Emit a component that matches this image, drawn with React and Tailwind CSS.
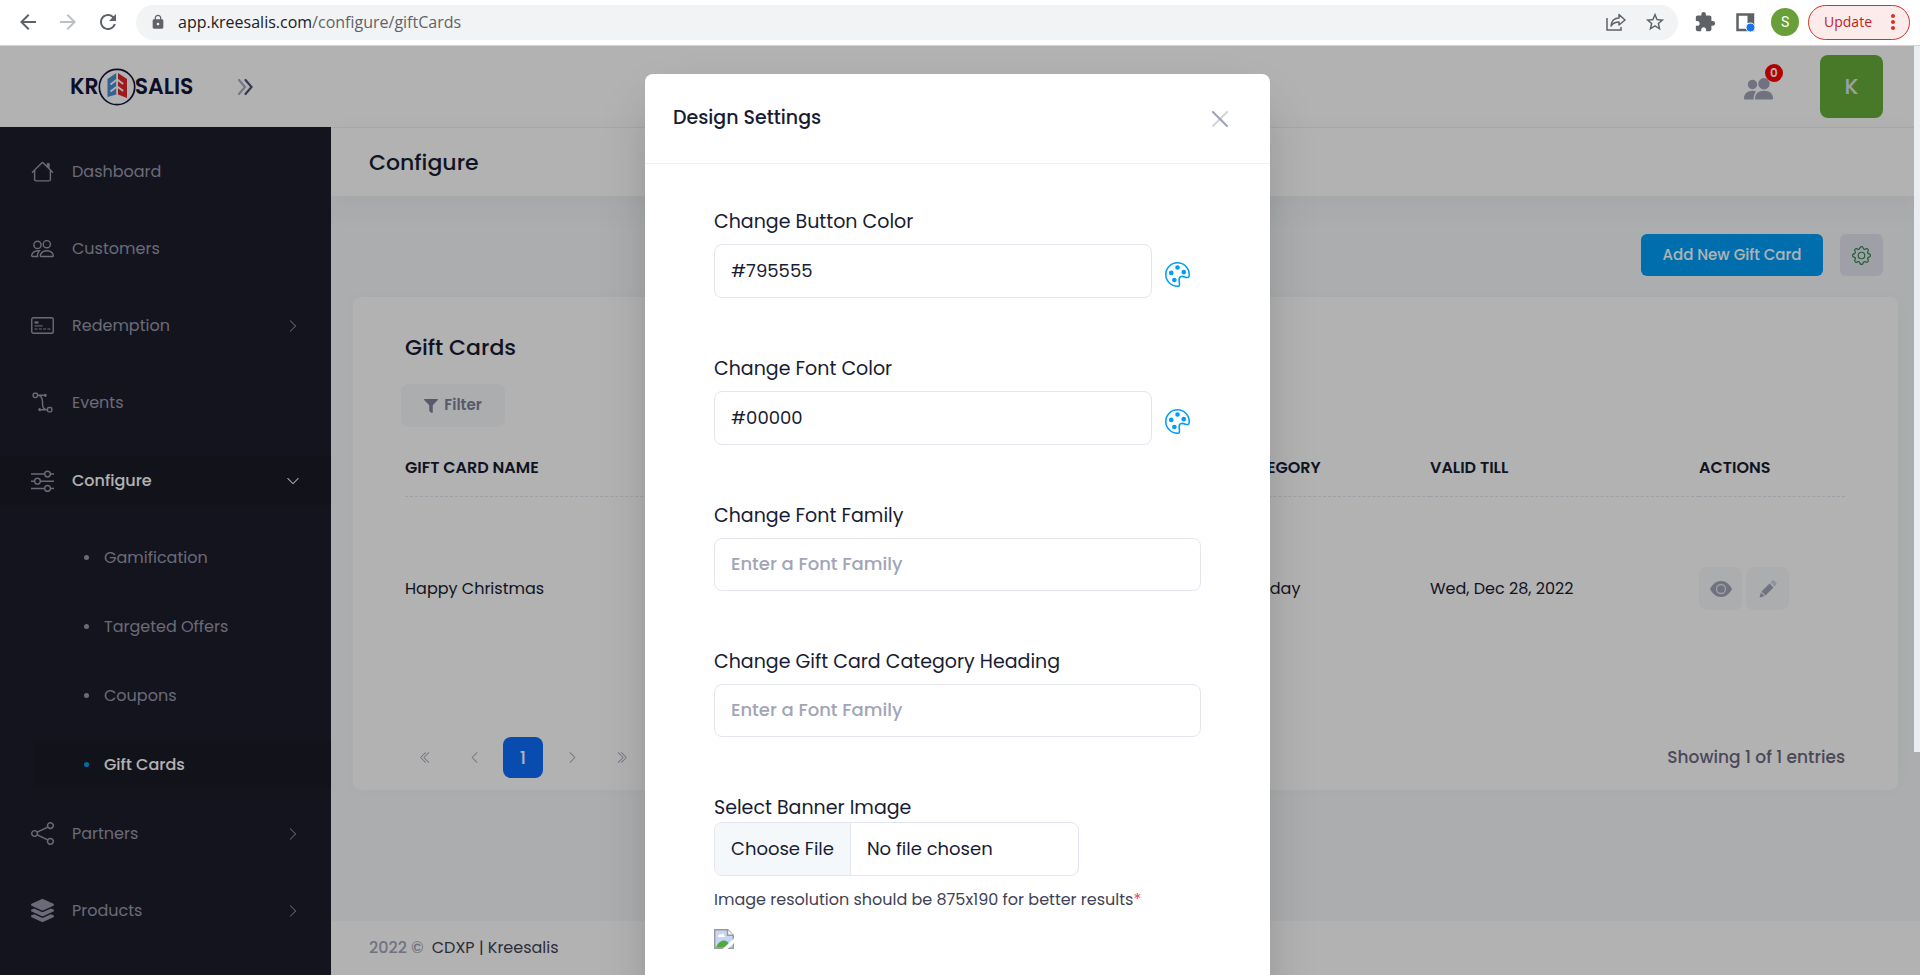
import { useState } from "react";
import {
    BsHouse,
    BsPeople,
    BsBezier2,
    BsSliders,
    BsShare,
    BsGear,
    BsPalette,
    BsChevronRight,
    BsChevronDown,
    BsChevronLeft,
    BsChevronDoubleLeft,
    BsChevronDoubleRight
} from "react-icons/bs";
import { FaFilter, FaLayerGroup } from "react-icons/fa";
import {
    MdArrowBack,
    MdArrowForward,
    MdRefresh,
    MdLock,
    MdStarBorder,
    MdExtension,
    MdMoreVert
} from "react-icons/md";

// =========================================
// ICONS
// =========================================

const CardIcon = ({ className }) => (
    <svg viewBox="0 0 23 17" className={className} fill="none" stroke="currentColor">
        <rect x="0.75" y="0.75" width="21.5" height="15.5" rx="1.8" strokeWidth="1.4" />
        <path d="M3.5 5.5h4" strokeWidth="2.2" />
        <path d="M3.5 8.9h8" strokeWidth="1.1" />
        <path d="M3.5 12h16" strokeWidth="1.1" strokeDasharray="3 1.3" />
    </svg>
);

const ShareIcon = () => (
    <svg viewBox="0 0 20 18" className="h-[18px] w-5 text-[#5f6368]" fill="none" stroke="currentColor" strokeWidth="1.5">
        <path d="M1 5v12h14v-3" />
        <path d="M5 13c.5-5 3-8 8-8V1.500l6 5.500-6 5V9c-3.500 0-6 1-8 4z" strokeLinejoin="round" />
    </svg>
);

const SidePanelIcon = () => (
    <svg viewBox="0 0 19 19" className="h-[19px] w-[19px]">
        <path d="M1.500 1.500h15.500v15.500h-15.500z" fill="none" stroke="#5f6368" strokeWidth="2.500" />
        <path d="M11.500 1h6v9h-6z" fill="#5f6368" />
        <circle cx="14.500" cy="14.500" r="4.500" fill="#1a73e8" stroke="#fff" strokeWidth="1" />
    </svg>
);

const UsersIcon = () => (
    <svg viewBox="0 0 29 22" className="h-[22px] w-[29px] text-[#a1a5b7]" fill="currentColor">
        <circle cx="8.500" cy="6.500" r="4.700" />
        <circle cx="20" cy="5.700" r="5.700" />
        <path d="M0 20.500C0 15.500 3.500 12.700 8.500 12.700c1.600 0 2.600.2 3.800.7-1.700 1.600-2.700 4-2.700 8.100H1c-.6 0-1-.4-1-1z" />
        <path d="M11 20.500c0-5 3.700-7.700 9-7.700s9 2.700 9 7.700c0 .6-.4 1-1 1H12c-.6 0-1-.4-1-1z" />
    </svg>
);

const EyeIcon = () => (
    <svg viewBox="0 0 22 16" className="h-4 w-[22px]">
        <path d="M11 0C16 0 19.500 3.500 22 8c-2.500 4.500-6 8-11 8S2.500 12.500 0 8C2.500 3.500 6 0 11 0z" fill="#a1a5b7" />
        <circle cx="11" cy="8" r="4.500" fill="none" stroke="#e4e6ef" strokeWidth="1.300" />
    </svg>
);

const PencilIcon = () => (
    <svg viewBox="0 0 18 18" className="h-[18px] w-[18px]">
        <path d="M11.500 2.500L13.200.8c.6-.6 1.500-.6 2.100 0l1.900 1.900c.6.600.6 1.500 0 2.100L15.500 6.500z" fill="#cfd2de" />
        <path d="M10.500 3.500l4 4-8 8-4-4z" fill="#a1a5b7" />
        <path d="M2 12.500L5.500 16 .5 17.600z" fill="#a1a5b7" />
    </svg>
);

const LogoMark = () => (
    <svg viewBox="0 0 38 38" className="-mx-px h-[38px] w-[38px]">
        <circle cx="19" cy="19" r="17.700" fill="none" stroke="#15153a" strokeWidth="1.700" />
        <path d="M18.200 5v21.500L9.500 29V11z" fill="#4a8fd0" />
        <path d="M20 5v21.500l9 3.500V11z" fill="#e3262b" />
        <path d="M19 11.500l-6.500 5M19 18.500l-6.500 5M19.200 11.500l6 4.500M19.200 18.500l6 4.500" stroke="#fff" strokeWidth="1.800" />
    </svg>
);

const BrokenImageIcon = () => (
    <svg viewBox="0 0 20 20" className="h-5 w-5" role="img" aria-label="Banner">
        <path d="M.7.7h13l5.600 5.600v13H.7z" fill="#c6d7f4" stroke="#9a9a9a" strokeWidth="1.400" />
        <path d="M13.500.7v5.600h5.800" fill="#fff" stroke="#9a9a9a" strokeWidth="1.400" />
        <path d="M4 7.500c0-1.500 1.500-2.500 3-2 1-1.500 3-.8 3 1 1 0 1.200 1 .8 1.500H4z" fill="#fff" />
        <path d="M2 18.600c2-5 5-7 8-7 2.500 0 4 1.500 5 3.500l-3 3.500z" fill="#53a93f" />
        <path d="M8.500 20L20 9.500V14l-6.500 6z" fill="#fff" />
    </svg>
);

// =========================================
// DATA
// =========================================

const topMenu = [
    { label: "Dashboard", icon: BsHouse },
    { label: "Customers", icon: BsPeople },
    { label: "Redemption", icon: CardIcon, arrow: true },
    { label: "Events", icon: BsBezier2 }
];

const configureMenu = ["Gamification", "Targeted Offers", "Coupons", "Gift Cards"];

const bottomMenu = [
    { label: "Partners", icon: BsShare, arrow: true },
    { label: "Products", icon: FaLayerGroup, arrow: true }
];

const giftCards = [
    { name: "Happy Christmas", category: "Birthday", validTill: "Wed, Dec 28, 2022" }
];

// =========================================
// BROWSER BAR
// =========================================

function BrowserBar() {

    return (

        <div className="flex h-[46px] shrink-0 items-center border-b border-[#d0d2d6] bg-white pr-[10px] pb-px pl-4 text-[#5f6368]">

            <button type="button" aria-label="Back"><MdArrowBack className="h-6 w-6" /></button>
            <button type="button" aria-label="Forward" className="ml-4 text-[#bdc1c6]"><MdArrowForward className="h-6 w-6" /></button>
            <button type="button" aria-label="Reload" className="mr-4 ml-4"><MdRefresh className="h-6 w-6" /></button>

            <div className="flex h-[35px] flex-1 items-center rounded-full bg-[#f1f3f4] pr-3 pl-[14px]">

                <MdLock className="h-4 w-4" />

                <p className="ml-3 flex-1 font-['Open_Sans',sans-serif] text-base">
                    <span className="text-[#202124]">app.kreesalis.com</span>/configure/giftCards
                </p>

                <button type="button" aria-label="Share"><ShareIcon /></button>
                <button type="button" aria-label="Bookmark" className="ml-[18px]"><MdStarBorder className="h-[22px] w-[22px]" /></button>

            </div>

            <button type="button" aria-label="Extensions" className="ml-4"><MdExtension className="h-[22px] w-[22px]" /></button>
            <button type="button" aria-label="Side panel" className="ml-5"><SidePanelIcon /></button>
            <span className="ml-4 flex h-7 w-7 items-center justify-center rounded-full bg-[#689f38] font-[Roboto,sans-serif] text-sm text-white">S</span>

            <button type="button" className="ml-[9px] flex h-[35px] items-center rounded-full border border-[#d93025] bg-[#fbeceb] pr-1 pl-[15px] font-['Open_Sans',sans-serif] text-sm text-[#c5221f]">
                Update
                <MdMoreVert className="ml-[9px] h-6 w-6 text-[#d93025]" />
            </button>

        </div>
    );
}

// =========================================
// SIDEBAR
// =========================================

function MenuItem({ item }) {

    const Icon = item.icon;

    return (
        <a href="#" className="flex h-[49px] items-center pr-[31px] pl-[31px] text-[#9899ac]">
            <Icon className="h-[23px] w-[23px] shrink-0" />
            <span className="ml-[18px] flex-1">{item.label}</span>
            {item.arrow && <BsChevronRight className="h-[14px] w-[14px]" />}
        </a>
    );
}

function Sidebar() {

    return (

        <aside className="flex w-[331px] shrink-0 flex-col bg-[#1e1e2d]">

            {/* LOGO */}

            <div className="flex h-[81px] items-center bg-white pl-[70px] text-[#15153a]">
                <a href="#" className="flex items-center text-[22px] font-semibold">
                    KR
                    <LogoMark />
                    SALIS
                </a>
                <button type="button" aria-label="Toggle menu" className="ml-[43px]">
                    <svg viewBox="0 0 18 18" className="h-[18px] w-[18px]" fill="none" strokeWidth="2.200" strokeLinecap="round">
                        <path d="M3 2l6 7-6 7" stroke="#a9a9c2" />
                        <path d="M9.500 2l6 7-6 7" stroke="#50507a" />
                    </svg>
                </button>
            </div>

            {/* MENU */}

            <nav className="flex flex-col gap-7 pt-[20px] text-base">

                {topMenu.map((item) => (
                    <MenuItem key={item.label} item={item} />
                ))}

                <div className="pt-px">
                    <a href="#" className="flex h-[49px] items-center bg-[#1b1b28] pr-[31px] pl-[31px] text-white">
                        <BsSliders className="h-[23px] w-[23px] text-[#9899ac]" />
                        <span className="ml-[18px] flex-1 font-medium">Configure</span>
                        <BsChevronDown className="h-[14px] w-[14px]" />
                    </a>

                    <div className="mt-[29px] flex flex-col gap-[22px]">
                        {configureMenu.map((label) => {

                            const active = label === "Gift Cards";

                            return (
                                <a
                                    key={label}
                                    href="#"
                                    className={
                                        active
                                            ? "ml-[33px] flex h-[47px] items-center bg-[#1b1b28] pl-[51px] font-medium text-white"
                                            : "ml-[33px] flex h-[47px] items-center pl-[51px] text-[#9899ac]"
                                    }
                                >
                                    <span className={active ? "mr-[15px] h-[5px] w-[5px] rounded-full bg-[#009ef7]" : "mr-[15px] h-[5px] w-[5px] rounded-full bg-[#9899ac]"}></span>
                                    {label}
                                </a>
                            );
                        })}
                    </div>
                </div>

                <div className="-mt-[7px] flex flex-col gap-7">
                    {bottomMenu.map((item) => (
                        <MenuItem key={item.label} item={item} />
                    ))}
                </div>

            </nav>

        </aside>
    );
}

// =========================================
// GIFT CARDS TABLE
// =========================================

function GiftCardsPanel() {

    return (

        <section className="mx-[22px] mt-[21px] rounded-lg bg-white pt-[35px] pr-[53px] pb-3 pl-[52px] shadow-[0_0_20px_rgba(76,87,125,0.02)]">

            <h2 className="text-[22px] leading-8 font-medium text-[#181c32]">Gift Cards</h2>

            <button type="button" className="mt-[20px] -ml-1 flex h-[43px] w-[104px] items-center justify-center gap-[6px] rounded-lg bg-[#f5f8fa] text-[15px] font-semibold text-[#7e8299]">
                <FaFilter className="h-[14px] w-[14px]" />
                Filter
            </button>

            <table className="mt-[14px] w-full table-fixed text-left text-base text-[#181c32]">
                <thead>
                    <tr className="h-[55px] border-b border-dashed border-[#e4e6ef] uppercase">
                        <th className="font-semibold">Gift Card Name</th>
                        <th className="w-[196px] font-semibold">Category</th>
                        <th className="w-[269px] font-semibold">Valid Till</th>
                        <th className="w-[146px] font-semibold">Actions</th>
                    </tr>
                </thead>
                <tbody>
                    {giftCards.map((card) => (
                        <tr key={card.name} className="h-[185px]">
                            <td>{card.name}</td>
                            <td>{card.category}</td>
                            <td>{card.validTill}</td>
                            <td>
                                <div className="flex gap-1">
                                    <button type="button" aria-label="View" className="flex h-[43px] w-[43px] items-center justify-center rounded-lg bg-[#f5f8fa]"><EyeIcon /></button>
                                    <button type="button" aria-label="Edit" className="flex h-[43px] w-[43px] items-center justify-center rounded-lg bg-[#f5f8fa]"><PencilIcon /></button>
                                </div>
                            </td>
                        </tr>
                    ))}
                </tbody>
            </table>

            {/* PAGINATION */}

            <div className="mt-14 flex items-center text-[#a1a5b7]">
                <button type="button" aria-label="First page" className="flex w-10 justify-center"><BsChevronDoubleLeft className="h-[13px] w-[13px]" /></button>
                <button type="button" aria-label="Previous page" className="ml-[9px] flex w-10 justify-center"><BsChevronLeft className="h-[13px] w-[13px]" /></button>
                <button type="button" className="mx-[9px] h-[41px] w-10 rounded-lg bg-[#0d6efd] text-lg font-medium text-white">1</button>
                <button type="button" aria-label="Next page" className="flex w-10 justify-center"><BsChevronRight className="h-[13px] w-[13px]" /></button>
                <button type="button" aria-label="Last page" className="ml-[9px] flex w-10 justify-center"><BsChevronDoubleRight className="h-[13px] w-[13px]" /></button>
                <p className="ml-auto text-[17px] font-medium text-[#6b6980]">Showing 1 of 1 entries</p>
            </div>

        </section>
    );
}

// =========================================
// DESIGN SETTINGS MODAL
// =========================================

const inputClass = "w-full rounded-lg border border-[#e4e6ef] px-4 pb-[2px] text-[18px] text-[#181c32] outline-none placeholder:font-medium placeholder:text-[#a1a5b7]";

function DesignSettings() {

    const [settings, setSettings] = useState({
        buttonColor: "#795555",
        fontColor: "#00000",
        fontFamily: "",
        categoryHeading: ""
    });

    const handleChange = (e) => {

        setSettings({
            ...settings,
            [e.target.name]: e.target.value
        });
    };

    return (

        <div role="dialog" aria-label="Design Settings" className="min-h-[1100px] w-[625px] rounded-lg bg-white text-[19px] leading-6 text-[#181c32] shadow-2xl">

            <div className="flex h-[90px] items-center justify-between border-b border-[#eff2f5] pr-[41px] pl-7">
                <h2 className="pb-[2px] font-medium">Design Settings</h2>
                <button type="button" aria-label="Close">
                    <svg viewBox="0 0 18 18" className="h-[18px] w-[18px]" fill="none" strokeWidth="2.200" strokeLinecap="round">
                        <path d="M16 2L2 16" stroke="#d3d5df" />
                        <path d="M2 2l14 14" stroke="#a1a5b7" />
                    </svg>
                </button>
            </div>

            <form className="px-[69px] pt-[46px]" onSubmit={(e) => e.preventDefault()}>

                {/* COLORS */}

                <label htmlFor="buttonColor" className="block">Change Button Color</label>
                <div className="mt-[10px] mb-[59px] flex h-[54px] items-center gap-[13px] pr-[11px]">
                    <input id="buttonColor" name="buttonColor" type="text" value={settings.buttonColor} onChange={handleChange} className={`h-full ${inputClass}`} />
                    <button type="button" aria-label="Pick button color" className="pt-[6px] text-[#009ef7]"><BsPalette className="h-[25px] w-[25px]" /></button>
                </div>

                <label htmlFor="fontColor" className="block">Change Font Color</label>
                <div className="mt-[10px] mb-[59px] flex h-[54px] items-center gap-[13px] pr-[11px]">
                    <input id="fontColor" name="fontColor" type="text" value={settings.fontColor} onChange={handleChange} className={`h-full ${inputClass}`} />
                    <button type="button" aria-label="Pick font color" className="pt-[6px] text-[#009ef7]"><BsPalette className="h-[25px] w-[25px]" /></button>
                </div>

                {/* FONTS */}

                <label htmlFor="fontFamily" className="mb-[10px] block">Change Font Family</label>
                <input id="fontFamily" name="fontFamily" type="text" placeholder="Enter a Font Family" value={settings.fontFamily} onChange={handleChange} className={`h-[53px] ${inputClass}`} />

                <label htmlFor="categoryHeading" className="mt-[59px] mb-[10px] block">Change Gift Card Category Heading</label>
                <input id="categoryHeading" name="categoryHeading" type="text" placeholder="Enter a Font Family" value={settings.categoryHeading} onChange={handleChange} className={`h-[53px] ${inputClass}`} />

                {/* BANNER */}

                <label htmlFor="banner" className="mt-[59px] mb-[2px] block">Select Banner Image</label>
                <input
                    id="banner"
                    type="file"
                    className="block h-[54px] w-3/4 rounded-lg border border-[#e4e6ef] text-[18px] leading-[52px] file:mr-4 file:h-[52px] file:border-r file:border-[#e4e6ef] file:bg-[#f5f8fa] file:px-4"
                />
                <p className="mt-3 text-base text-[#3f4254]">
                    Image resolution should be 875x190 for better results<span className="text-[#f1416c]">*</span>
                </p>
                <div className="mt-[17px]"><BrokenImageIcon /></div>

            </form>

        </div>
    );
}

// =========================================
// PAGE
// =========================================

export default function App() {

    return (

        <div className="flex h-screen flex-col overflow-hidden bg-white font-[Poppins,Inter,sans-serif]">

            <BrowserBar />

            <div className="relative flex min-h-0 flex-1 overflow-hidden">

                <Sidebar />

                <div className="flex min-w-0 flex-1 flex-col bg-[#f5f8fa]">

                    {/* HEADER */}

                    <header className="flex h-[82px] shrink-0 items-center justify-end border-b border-[#eff2f5] bg-white pr-[37px]">
                        <button type="button" aria-label="Members" className="relative mt-1 mr-[47px]">
                            <UsersIcon />
                            <span className="absolute -top-[14px] -right-[10px] flex h-[18px] w-[18px] items-center justify-center rounded-full bg-[#ff0000] text-xs font-semibold text-white">0</span>
                        </button>
                        <button type="button" className="h-[63px] w-[63px] rounded-lg bg-[#67ae3c] text-[22px] font-medium text-[#dbe6ef]">K</button>
                    </header>

                    <div className="flex h-[68px] shrink-0 items-center bg-white pl-[38px] shadow-[0_10px_30px_rgba(82,63,105,0.05)]">
                        <h1 className="text-[22px] font-medium text-[#181c32]">Configure</h1>
                    </div>

                    {/* ACTIONS */}

                    <div className="mt-[38px] flex justify-end gap-[17px] pr-[37px]">
                        <button type="button" className="h-[42px] w-[182px] rounded-md bg-[#009ef7] text-[15px] font-medium text-white">Add New Gift Card</button>
                        <button type="button" aria-label="Design settings" className="flex h-[42px] w-[43px] items-center justify-center rounded-md bg-[#e4e6ef] text-[#2f8a4c]"><BsGear className="h-[19px] w-[19px]" /></button>
                    </div>

                    <GiftCardsPanel />

                    <footer className="mt-auto flex h-[54px] shrink-0 items-center gap-2 bg-white pl-[38px] text-base">
                        <span className="font-medium text-[#a1a5b7]">2022 ©</span>
                        <a href="#" className="text-[#3f4254]">CDXP | Kreesalis</a>
                    </footer>

                </div>

                {/* BACKDROP AND MODAL */}

                <div className="absolute inset-0 flex items-start justify-center overflow-hidden bg-black/30 pt-7 pr-[5px]">
                    <DesignSettings />
                </div>

                <div className="absolute top-0 right-0 h-[76%] w-[6px] bg-[#eaedf2]"></div>

            </div>

        </div>
    );
}
